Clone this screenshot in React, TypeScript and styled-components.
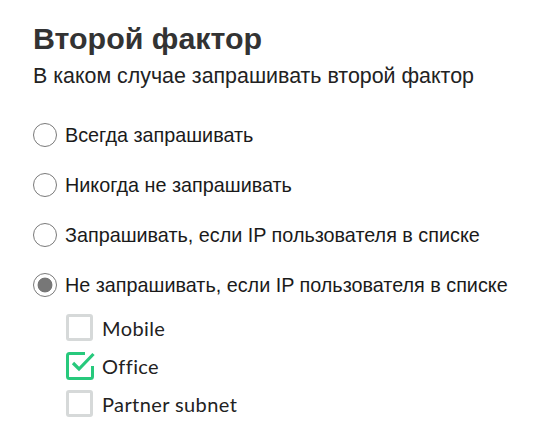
import { type FC } from 'react'
import styled, { createGlobalStyle } from 'styled-components'

const GlobalStyle = createGlobalStyle`
  html, body {
    margin: 0;
    padding: 0;
    background: #ffffff;
  }
  body {
    font-family: 'Liberation Sans', Arial, sans-serif;
    color: #222222;
  }
`

const options = [
  'Всегда запрашивать',
  'Никогда не запрашивать',
  'Запрашивать, если IP пользователя в списке',
  'Не запрашивать, если IP пользователя в списке'
]

const networks = [
  { name: 'Mobile', checked: false },
  { name: 'Office', checked: true },
  { name: 'Partner subnet', checked: false }
]

const CheckedBox: FC = () => (
  <svg width="28" height="28" viewBox="0 0 28 28" style={{ overflow: 'visible' }}>
    <path
      d="M19 1.5 H3.5 Q1.5 1.5 1.5 3.5 V24.5 Q1.5 26.5 3.5 26.5 H24.5 Q26.5 26.5 26.5 24.5 V14"
      fill="none"
      stroke="#27c97c"
      strokeWidth="3"
    />
    <path d="M7 11 L13 17 L27.5 2" fill="none" stroke="#27c97c" strokeWidth="3.2" />
  </svg>
)

const App: FC = () => {
  return (
    <Page>
      <GlobalStyle />
      <Title>Второй фактор</Title>
      <Subtitle>В каком случае запрашивать второй фактор</Subtitle>
      <RadioList>
        {options.map((label, index) => (
          <RadioRow key={label}>
            <Radio $checked={index === 3} />
            <RadioLabel>{label}</RadioLabel>
          </RadioRow>
        ))}
      </RadioList>
      <CheckList>
        {networks.map((item) => (
          <CheckRow key={item.name}>
            <BoxSlot>{item.checked ? <CheckedBox /> : <EmptyBox />}</BoxSlot>
            <CheckLabel>{item.name}</CheckLabel>
          </CheckRow>
        ))}
      </CheckList>
    </Page>
  )
}

const Page = styled.div`
  padding: 20px 0 0 33px;
`
const Title = styled.h1`
  margin: 0;
  font-size: 30.4px;
  line-height: 36px;
  font-weight: 700;
  color: #333333;
`
const Subtitle = styled.p`
  margin: 7px 0 0;
  font-size: 21.4px;
  line-height: 26px;
  color: #222222;
`
const RadioList = styled.div`
  margin-top: 34px;
  display: flex;
  flex-direction: column;
  gap: 26px;
`
const RadioRow = styled.label`
  display: flex;
  align-items: center;
  gap: 8px;
  height: 24px;
`
const Radio = styled.span<{ $checked: boolean }>`
  box-sizing: border-box;
  width: 24px;
  height: 24px;
  border-radius: 50%;
  border: 1.5px solid #7a7a7a;
  background: ${({ $checked }) =>
    $checked ? 'radial-gradient(circle, #777777 0 7px, #ffffff 7.8px)' : '#ffffff'};
  flex-shrink: 0;
`
const RadioLabel = styled.span`
  font-size: 19.8px;
  line-height: 24px;
  color: #1a1a1a;
`
const CheckList = styled.div`
  margin: 17px 0 0 33px;
  display: flex;
  flex-direction: column;
  gap: 11px;
`
const CheckRow = styled.label`
  display: flex;
  align-items: center;
  gap: 8px;
  height: 27px;
`
const BoxSlot = styled.span`
  display: flex;
  width: 28px;
  height: 28px;
  flex-shrink: 0;
`
const EmptyBox = styled.span`
  box-sizing: border-box;
  width: 27px;
  height: 27px;
  border: 3px solid #d6d9d9;
  border-radius: 3px;
`
const CheckLabel = styled.span`
  font-family: 'Lato', 'Noto Sans', sans-serif;
  font-size: 20px;
  letter-spacing: 0.4px;
  line-height: 24px;
  color: #222222;
`

export default App
